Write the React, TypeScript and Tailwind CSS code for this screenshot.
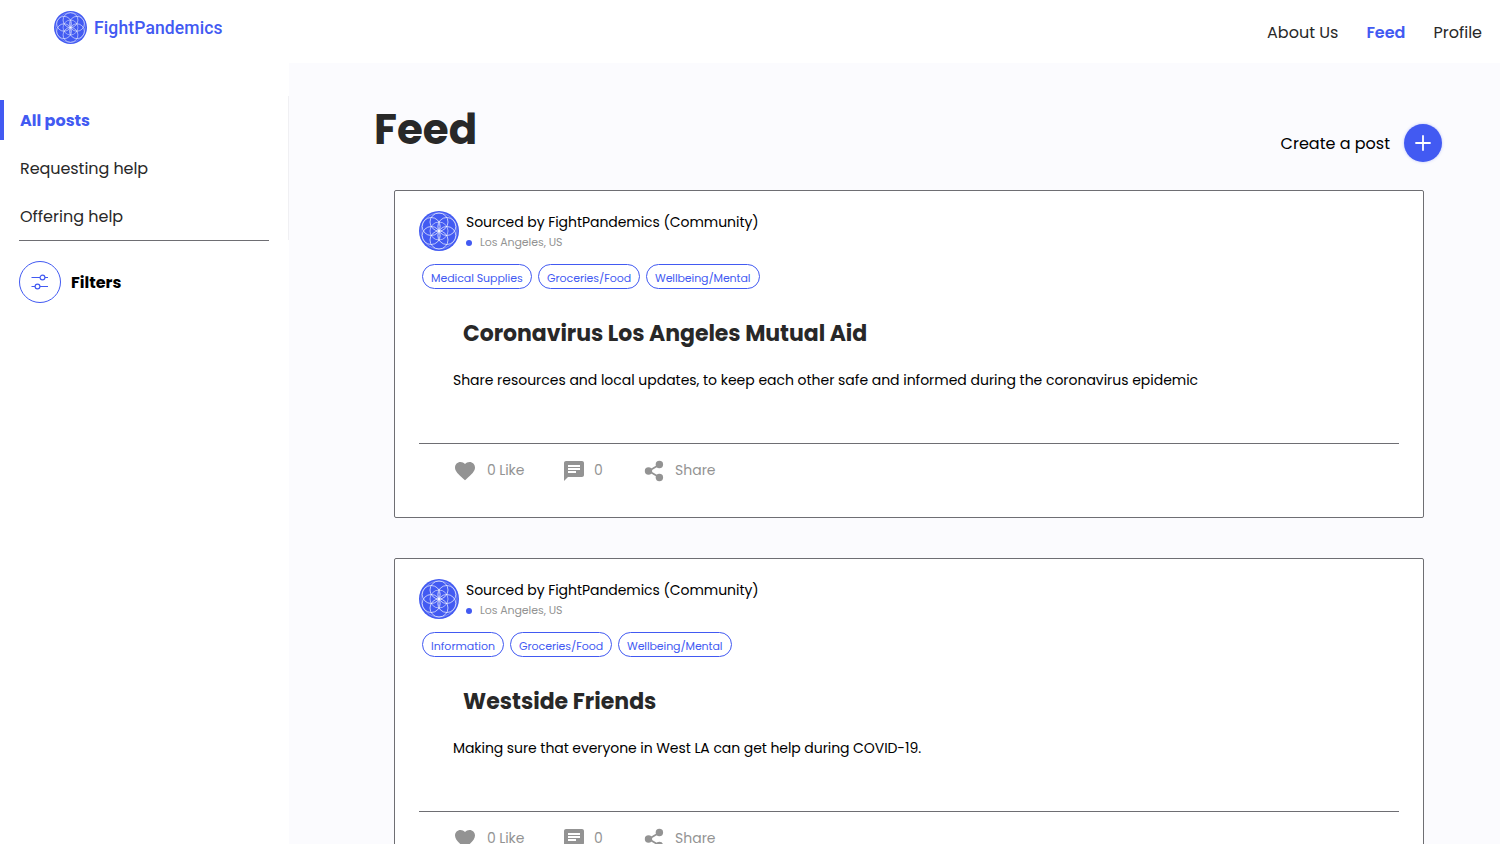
import React from "react";
import { MdChat, MdFavorite } from "react-icons/md";

type Post = {
  title: string;
  titleClass: string;
  body: string;
  bodyClass: string;
  tags: { label: string; className: string }[];
};

const medical = { label: "Medical Supplies", className: "w-[110px] tracking-[-0.06px]" };
const information = { label: "Information", className: "w-[82px]" };
const groceries = { label: "Groceries/Food", className: "w-[102px] tracking-[-0.06px]" };
const wellbeing = { label: "Wellbeing/Mental", className: "w-[113.5px] tracking-[-0.11px]" };

const posts: Post[] = [
  {
    title: "Coronavirus Los Angeles Mutual Aid",
    titleClass: "tracking-[-0.05px]",
    body: "Share resources and local updates, to keep each other safe and informed during the coronavirus epidemic",
    bodyClass: "tracking-[-0.027px]",
    tags: [medical, groceries, wellbeing],
  },
  {
    title: "Westside Friends",
    titleClass: "",
    body: "Making sure that everyone in West LA can get help during COVID-19.",
    bodyClass: "tracking-[-0.073px]",
    tags: [information, groceries, wellbeing],
  },
];

const petals = [30, 90, 150, 210, 270, 330].map((deg) => ({
  cx: 20 + 9 * Math.cos((deg * Math.PI) / 180),
  cy: 20 + 9 * Math.sin((deg * Math.PI) / 180),
}));

function Flower({ className }: { className: string }) {
  return (
    <svg viewBox="0 0 40 40" className={className}>
      <circle cx="20" cy="20" r="20" fill="#425af2" />
      <g fill="none" stroke="#fff" strokeOpacity="0.75" strokeWidth="0.9">
        <circle cx="20" cy="20" r="18" strokeOpacity="0.35" />
        <circle cx="20" cy="20" r="9" strokeOpacity="0.6" />
        {petals.map((p, i) => (
          <circle key={i} cx={p.cx} cy={p.cy} r="9" />
        ))}
        <path d="M20 13v14" strokeWidth="0.5" />
      </g>
    </svg>
  );
}

function ShareIcon() {
  return (
    <svg viewBox="0 0 24 24" className="size-6" fill="currentColor">
      <path d="M17.3 5.7L6.7 12l10.6 6.3" fill="none" stroke="currentColor" strokeWidth="1.8" />
      <circle cx="17.4" cy="5.5" r="3.7" />
      <circle cx="6.5" cy="12" r="3.7" />
      <circle cx="17.4" cy="18.5" r="3.7" />
    </svg>
  );
}

function Header() {
  return (
    <header className="flex h-[63px] shrink-0 items-start justify-between bg-white pl-[54px]">
      <div className="flex items-start pt-[11px]">
        <Flower className="size-[33px]" />
        <span className="mt-px ml-[7px] font-['Roboto',sans-serif] text-[17.5px] leading-[33px] font-medium tracking-[0.13px] text-[#425af2]">
          FightPandemics
        </span>
      </div>
      <nav className="flex gap-7 pt-[21px] pr-[18px] text-base leading-6 text-[#282828]">
        <a>About Us</a>
        <a className="font-semibold text-[#425af2]">Feed</a>
        <a>Profile</a>
      </nav>
    </header>
  );
}

function Sidebar() {
  return (
    <aside className="w-[289px] shrink-0 bg-white pt-[33px] text-base">
      <div className="h-36 border-r border-[#f0f0f3] pt-1 leading-[42px] text-[#282828]">
        <div className="h-12">
          <div className="h-10 border-l-4 border-[#425af2] pl-4 font-bold text-[#425af2]">
            All posts
          </div>
        </div>
        <div className="h-12 pl-5 tracking-[-0.06px]">Requesting help</div>
        <div className="h-11 pl-5">Offering help</div>
      </div>
      <div className="ml-[19px] w-[250px] border-t border-[#6e6e73]" />
      <div className="mt-5 ml-[19px] flex items-center">
        <div className="flex size-[42px] items-center justify-center rounded-full border border-[#425af2]">
          <svg viewBox="0 0 18 16" className="h-4 w-[18px]" fill="none" stroke="#425af2" strokeWidth="1.2">
            <path d="M0.5 3.5h8.5M14 3.5h3M0.5 12.5h3.5M9 12.5h8" />
            <circle cx="11.5" cy="3.5" r="2.4" />
            <circle cx="6.5" cy="12.5" r="2.4" />
          </svg>
        </div>
        <span className="ml-[10px] pt-0.5 font-bold text-black">Filters</span>
      </div>
    </aside>
  );
}

function PostCard({ post }: { post: Post }) {
  return (
    <article className="flex h-[328px] shrink-0 flex-col rounded-[2px] border border-[#6e6e73] bg-white px-6 pt-5">
      <div className="flex h-10">
        <Flower className="size-10" />
        <div className="ml-[7px] pt-px">
          <div className="text-[14px] leading-5 tracking-[-0.055px] text-black">
            Sourced by FightPandemics (Community)
          </div>
          <div className="flex items-center text-[11px] leading-5 tracking-[-0.07px] text-[#939393]">
            <span className="mt-0.5 mr-[8px] size-[6px] rounded-full bg-[#425af2]" />
            Los Angeles, US
          </div>
        </div>
      </div>
      <div className="mt-[13px] ml-[3px] flex gap-[6px]">
        {post.tags.map((tag) => (
          <span
            key={tag.label}
            className={`h-[25px] rounded-full border border-[#425af2] pt-[3px] pl-[8px] text-[11px] leading-5 whitespace-nowrap text-[#425af2] ${tag.className}`}
          >
            {tag.label}
          </span>
        ))}
      </div>
      <h2 className={`mt-[29px] ml-[44px] text-[22px] leading-8 font-bold text-[#282828] ${post.titleClass}`}>
        {post.title}
      </h2>
      <p className={`mt-[20px] ml-[34px] text-[14px] leading-5 text-black ${post.bodyClass}`}>{post.body}</p>
      <div className="mt-[53px] border-t border-[#6e6e73]" />
      <div className="mt-[15px] ml-[34px] flex h-6 items-center text-[14px] leading-5 text-[#939393]">
        <div className="flex w-[109px] items-center">
          <MdFavorite size={24} />
          <span className="mb-0.5 ml-[10px] tracking-[-0.1px]">0 Like</span>
        </div>
        <div className="flex w-20 items-center">
          <MdChat size={24} />
          <span className="mb-0.5 ml-[8px]">0</span>
        </div>
        <ShareIcon />
        <span className="mb-0.5 ml-[9px]">Share</span>
      </div>
    </article>
  );
}

export default function App() {
  return (
    <div className="flex h-[844px] flex-col overflow-hidden bg-[#fbfbfe] font-['Poppins','Inter',sans-serif]">
      <Header />
      <div className="flex min-h-0 flex-1">
        <Sidebar />
        <main className="min-w-0 flex-1">
          <div className="flex h-[127px] items-start justify-between pr-[58px] pl-[85px]">
            <h1 className="pt-[42px] text-[42px] leading-[50px] font-bold text-[#282828]">Feed</h1>
            <div className="mt-[61px] flex items-center">
              <span className="mr-[14px] pt-0.5 text-base text-black">Create a post</span>
              <button className="flex size-[38px] items-center justify-center rounded-full bg-[#425af2] shadow-[0_0_3px_rgba(66,90,242,0.35)]">
                <svg viewBox="0 0 16 16" className="size-4" stroke="#fff" strokeWidth="1.8" strokeLinecap="round">
                  <path d="M8 1v14M1 8h14" />
                </svg>
              </button>
            </div>
          </div>
          <div className="flex flex-col gap-10 pr-[76px] pl-[105px]">
            {posts.map((post) => (
              <PostCard key={post.title} post={post} />
            ))}
          </div>
        </main>
      </div>
    </div>
  );
}
